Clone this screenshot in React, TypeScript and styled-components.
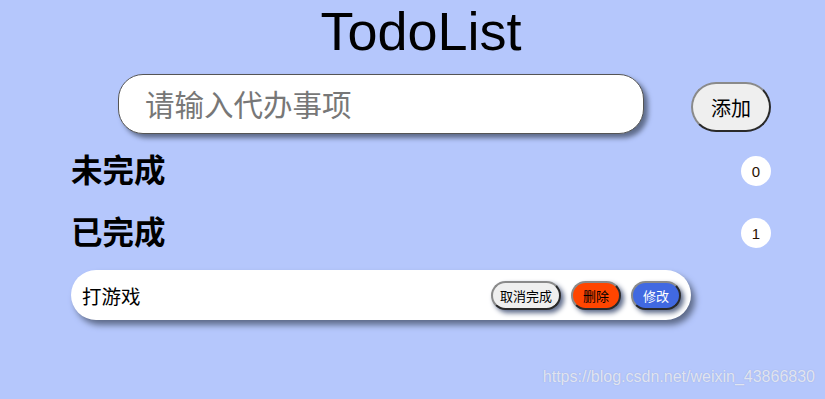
import React, { useState } from "react";
import styled, { createGlobalStyle, css } from "styled-components";

const GlobalStyle = createGlobalStyle`
  html, body {
    margin: 0;
    padding: 0;
    background: #b5c7fc;
    font-family: "Noto Sans", "Noto Sans CJK SC", sans-serif;
  }
  #root {
    min-height: 399px;
    position: relative;
  }
`;

type Todo = { id: number; text: string; done: boolean };

const initialTodos: Todo[] = [{ id: 1, text: "打游戏", done: true }];

export default function App() {
  const [todos] = useState<Todo[]>(initialTodos);
  const pending = todos.filter((t) => !t.done);
  const finished = todos.filter((t) => t.done);

  return (
    <>
      <GlobalStyle />
      <Page>
        <Title>TodoList</Title>
        <InputRow>
          <TodoInput placeholder="请输入代办事项" />
          <AddButton>添加</AddButton>
        </InputRow>

        <Section>
          <SectionTitle>未完成</SectionTitle>
          <Count>{pending.length}</Count>
        </Section>

        <Section>
          <SectionTitle>已完成</SectionTitle>
          <Count>{finished.length}</Count>
        </Section>

        <List>
          {finished.map((todo) => (
            <Item key={todo.id}>
              <ItemText>{todo.text}</ItemText>
              <Actions>
                <SmallButton>取消完成</SmallButton>
                <SmallButton $variant="danger">删除</SmallButton>
                <SmallButton $variant="primary">修改</SmallButton>
              </Actions>
            </Item>
          ))}
        </List>
      </Page>
      <Watermark>https://blog.csdn.net/weixin_43866830</Watermark>
    </>
  );
}

const Page = styled.div`
  width: 700px;
  margin-left: 71px;
  display: flex;
  flex-direction: column;
`;

const Title = styled.h1`
  margin: 0;
  line-height: normal;
  text-align: center;
  font-family: "Liberation Sans", "Noto Sans CJK SC", sans-serif;
  font-size: 54px;
  font-weight: 400;
  color: #000;
`;

const InputRow = styled.div`
  display: flex;
  align-items: flex-start;
  gap: 47px;
  padding-left: 47px;
  margin: 12px 0 3px;
`;

const TodoInput = styled.input`
  box-sizing: border-box;
  width: 526px;
  height: 60px;
  padding: 0 26px;
  border: 1px solid #555;
  border-radius: 25px;
  background: #fff;
  box-shadow: 4px 4px 5px #5e6b8a;
  font-family: inherit;
  font-size: 29.5px;
  outline: none;

  &::placeholder {
    color: #777;
  }
`;

const buttonBorder = css`
  border-width: 2px;
  border-style: solid;
  border-color: #8a8a8a #2a2a2a #2a2a2a #8a8a8a;
`;

const AddButton = styled.button`
  box-sizing: border-box;
  width: 80px;
  height: 50px;
  margin-top: 8px;
  ${buttonBorder}
  border-radius: 25px;
  background: #efefef;
  font-family: inherit;
  font-size: 20px;
  color: #000;
  cursor: pointer;
`;

const Section = styled.div`
  display: flex;
  align-items: center;
  justify-content: space-between;
  height: 62px;
`;

const SectionTitle = styled.h2`
  margin: 0;
  font-size: 31.5px;
  font-weight: 700;
  color: #000;
`;

const Count = styled.span`
  width: 30px;
  height: 30px;
  margin-top: 6px;
  border-radius: 50%;
  background: #fff;
  display: flex;
  align-items: center;
  justify-content: center;
  font-family: "Liberation Sans", sans-serif;
  font-size: 15px;
  color: #2a1200;
`;

const List = styled.ul`
  list-style: none;
  margin: 9px 0 0;
  padding: 0;
`;

const Item = styled.li`
  box-sizing: border-box;
  width: 620px;
  height: 50px;
  padding: 0 10px 0 11px;
  border-radius: 25px;
  background: #fff;
  box-shadow: 4px 5px 6px #5e6b8a;
  display: flex;
  align-items: center;
  justify-content: space-between;
`;

const ItemText = styled.span`
  font-size: 19.5px;
  color: #000;
`;

const Actions = styled.div`
  display: flex;
  gap: 10px;
`;

const variants = {
  default: css`
    background: #efefef;
    color: #000;
    width: 70px;
  `,
  danger: css`
    background: #ff4500;
    color: #000;
    width: 50px;
  `,
  primary: css`
    background: #4169e1;
    color: #fff;
    width: 50px;
  `,
};

const SmallButton = styled.button<{ $variant?: keyof typeof variants }>`
  box-sizing: border-box;
  height: 29px;
  padding: 0;
  ${buttonBorder}
  border-radius: 15px;
  box-shadow: 3px 3px 5px #5e6b8a;
  font-family: inherit;
  font-size: 13px;
  white-space: nowrap;
  cursor: pointer;
  ${({ $variant = "default" }) => variants[$variant]}
`;

const Watermark = styled.div`
  position: absolute;
  right: 10px;
  top: 368px;
  font-family: "Liberation Sans", sans-serif;
  font-size: 16px;
  color: rgba(255, 255, 255, 0.7);
  text-shadow: 0 0 1px rgba(120, 130, 160, 0.5);
`;
